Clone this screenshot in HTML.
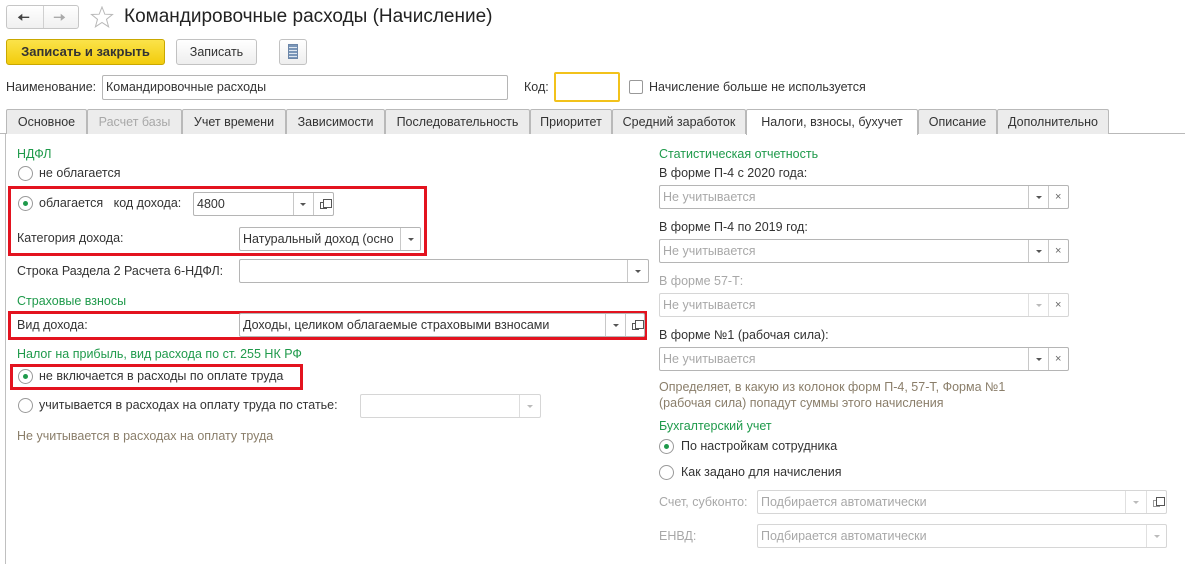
<!DOCTYPE html>
<html><head><meta charset="utf-8"><style>
*{box-sizing:border-box;margin:0;padding:0}
body{width:1185px;height:561px;background:#fff;font-family:"Liberation Sans",Arial,sans-serif;font-size:12.5px;color:#333;position:relative;overflow:hidden}
.a{position:absolute;white-space:nowrap}
.g{color:#1f9a4b}
.n{color:#8a7e6a}
.d{color:#a8a8a8}
.in{position:absolute;border:1px solid #b5b5b5;border-radius:2px;background:#fff;height:24px;line-height:22px;padding-left:3px;overflow:hidden;white-space:nowrap}
.in.dis{border-color:#d6d6d6}
.dv{position:absolute;top:0;bottom:0;border-left:1px solid #c8c8c8}
.ar{position:absolute;top:10px;width:0;height:0;border-left:3px solid transparent;border-right:3px solid transparent;border-top:3px solid #555}
.dis .ar{border-top-color:#bbb}
.x{position:absolute;top:0;font-size:11px;color:#666}
.r{position:absolute;width:15px;height:15px;border:1px solid #9a9a9a;border-radius:50%;background:#fff}
.r.s::after{content:"";position:absolute;left:4px;top:4px;width:5px;height:5px;border-radius:50%;background:#1f9a4b}
.red{position:absolute;border:3px solid #e3131f}
.tab{position:absolute;top:109px;height:25px;border:1px solid #b9b9b9;border-bottom:none;background:#ececec;line-height:24px;text-align:center;border-radius:2px 2px 0 0}
.cp{position:absolute;top:6px;width:9px;height:9px;border:1px solid #555}
.cp::before{content:"";position:absolute;left:2px;top:-4px;width:7px;height:7px;border:1px solid #555;background:#fff}
</style></head><body>
<div class="a" style="left:6px;top:5px;width:73px;height:24px;border:1px solid #c6c6c6;border-radius:3px;background:linear-gradient(#fff,#f0f0f0)"></div>
<div class="a" style="left:43px;top:6px;height:22px;border-left:1px solid #d0d0d0"></div>
<div class="a" style="left:17px;top:7px;font-size:16px;color:#444">&#129028;</div>
<div class="a" style="left:53px;top:7px;font-size:16px;color:#aaa">&#129030;</div>
<svg class="a" style="left:90px;top:6px" width="24" height="22" viewBox="0 0 24 22"><path d="M12 1 L14.8 8.2 L22.5 8.5 L16.5 13.3 L18.6 20.8 L12 16.5 L5.4 20.8 L7.5 13.3 L1.5 8.5 L9.2 8.2 Z" fill="none" stroke="#b8b8b8" stroke-width="1"/></svg>
<div class="a" style="left:124px;top:6px;font-size:19px;color:#222">Командировочные расходы (Начисление)</div>
<div class="a" style="left:6px;top:39px;width:159px;height:26px;border:1px solid #c9a800;border-radius:3px;background:linear-gradient(#fbe34a,#f2cc0c);font-weight:bold;line-height:24px;text-align:center;color:#333;font-size:13px">Записать и закрыть</div>
<div class="a" style="left:176px;top:39px;width:81px;height:26px;border:1px solid #c2c2c2;border-radius:3px;background:linear-gradient(#fff,#eee);line-height:24px;text-align:center">Записать</div>
<div class="a" style="left:279px;top:39px;width:28px;height:26px;border:1px solid #c2c2c2;border-radius:3px;background:linear-gradient(#fff,#eee)"></div>
<div class="a" style="left:288px;top:44px;width:10px;height:15px;background:repeating-linear-gradient(#7a96b8 0 2px,#dfe7f0 2px 3px);border:1px solid #6c86a8"></div>
<div class="a" style="left:6px;top:80px">Наименование:</div>
<div class="in" style="left:102px;top:75px;width:406px;height:25px">Командировочные расходы</div>
<div class="a" style="left:524px;top:80px">Код:</div>
<div class="a" style="left:554px;top:72px;width:66px;height:30px;border:2px solid #f2c21b;border-radius:2px"></div>
<div class="a" style="left:629px;top:80px;width:14px;height:14px;border:1px solid #999;border-radius:2px"></div>
<div class="a" style="left:649px;top:80px">Начисление больше не используется</div>
<div class="a" style="left:0;top:133px;width:1185px;border-top:1px solid #b9b9b9"></div>
<div class="tab" style="left:6px;width:81px">Основное</div>
<div class="tab d" style="left:87px;width:95px">Расчет базы</div>
<div class="tab" style="left:182px;width:104px">Учет времени</div>
<div class="tab" style="left:286px;width:99px">Зависимости</div>
<div class="tab" style="left:385px;width:145px">Последовательность</div>
<div class="tab" style="left:530px;width:82px">Приоритет</div>
<div class="tab" style="left:612px;width:134px">Средний заработок</div>
<div class="tab" style="left:746px;width:172px;background:#fff;height:26px">Налоги, взносы, бухучет</div>
<div class="tab" style="left:918px;width:79px">Описание</div>
<div class="tab" style="left:997px;width:112px">Дополнительно</div>
<div class="a" style="left:5px;top:134px;height:430px;border-left:1px solid #c0c0c0"></div>
<div class="a g" style="left:17px;top:147px">НДФЛ</div>
<div class="r" style="left:18px;top:166px"></div><div class="a" style="left:39px;top:166px">не облагается</div>
<div class="red" style="left:8px;top:186px;width:419px;height:70px"></div>
<div class="r s" style="left:18px;top:196px"></div><div class="a" style="left:39px;top:196px">облагается&nbsp;&nbsp; код дохода:</div>
<div class="in" style="left:193px;top:192px;width:141px">4800<div class="dv" style="left:99px"></div><div class="ar" style="left:106px"></div><div class="dv" style="left:119px"></div><div class="cp" style="left:126px;top:9px;width:7px;height:7px"></div></div>
<div class="a" style="left:17px;top:231px">Категория дохода:</div>
<div class="in" style="left:239px;top:227px;width:182px">Натуральный доход (осно<div class="dv" style="left:160px;background:#fff;width:22px"></div><div class="ar" style="left:168px"></div></div>
<div class="a" style="left:17px;top:264px">Строка Раздела 2 Расчета 6-НДФЛ:</div>
<div class="in" style="left:239px;top:259px;width:410px"><div class="dv" style="left:387px"></div><div class="ar" style="left:395px"></div></div>
<div class="a g" style="left:17px;top:294px">Страховые взносы</div>
<div class="red" style="left:8px;top:311px;width:639px;height:29px"></div>
<div class="a" style="left:17px;top:318px">Вид дохода:</div>
<div class="in" style="left:239px;top:313px;width:406px">Доходы, целиком облагаемые страховыми взносами<div class="dv" style="left:365px"></div><div class="ar" style="left:373px"></div><div class="dv" style="left:385px"></div><div class="cp" style="left:392px;top:9px;width:7px;height:7px"></div></div>
<div class="a g" style="left:17px;top:347px">Налог на прибыль, вид расхода по ст. 255 НК РФ</div>
<div class="red" style="left:10px;top:364px;width:293px;height:26px"></div>
<div class="r s" style="left:18px;top:369px"></div><div class="a" style="left:39px;top:369px">не включается в расходы по оплате труда</div>
<div class="r" style="left:18px;top:398px"></div><div class="a" style="left:39px;top:398px">учитывается в расходах на оплату труда по статье:</div>
<div class="in dis" style="left:360px;top:394px;width:181px"><div class="dv" style="left:158px;border-color:#ddd"></div><div class="ar" style="left:166px"></div></div>
<div class="a n" style="left:17px;top:429px">Не учитывается в расходах на оплату труда</div>
<div class="a g" style="left:659px;top:147px">Статистическая отчетность</div>
<div class="a" style="left:659px;top:166px">В форме П-4 с 2020 года:</div>
<div class="in" style="left:659px;top:185px;width:410px"><span class="d">Не учитывается</span><div class="dv" style="left:368px"></div><div class="ar" style="left:376px"></div><div class="dv" style="left:388px"></div><div class="x" style="left:395px">×</div></div>
<div class="a" style="left:659px;top:220px">В форме П-4 по 2019 год:</div>
<div class="in" style="left:659px;top:239px;width:410px"><span class="d">Не учитывается</span><div class="dv" style="left:368px"></div><div class="ar" style="left:376px"></div><div class="dv" style="left:388px"></div><div class="x" style="left:395px">×</div></div>
<div class="a d" style="left:659px;top:274px">В форме 57-Т:</div>
<div class="in dis" style="left:659px;top:293px;width:410px"><span class="d">Не учитывается</span><div class="dv" style="left:368px;border-color:#e0e0e0"></div><div class="ar" style="left:376px"></div><div class="dv" style="left:388px;border-color:#e0e0e0"></div><div class="x d" style="left:395px">×</div></div>
<div class="a" style="left:659px;top:328px">В форме №1 (рабочая сила):</div>
<div class="in" style="left:659px;top:347px;width:410px"><span class="d">Не учитывается</span><div class="dv" style="left:368px"></div><div class="ar" style="left:376px"></div><div class="dv" style="left:388px"></div><div class="x" style="left:395px">×</div></div>
<div class="a n" style="left:659px;top:379px;line-height:16px">Определяет, в какую из колонок форм П-4, 57-Т, Форма №1<br>(рабочая сила) попадут суммы этого начисления</div>
<div class="a g" style="left:659px;top:419px">Бухгалтерский учет</div>
<div class="r s" style="left:659px;top:439px"></div><div class="a" style="left:681px;top:439px">По настройкам сотрудника</div>
<div class="r" style="left:659px;top:465px"></div><div class="a" style="left:681px;top:465px">Как задано для начисления</div>
<div class="a d" style="left:659px;top:495px">Счет, субконто:</div>
<div class="in dis" style="left:757px;top:490px;width:410px"><span class="d">Подбирается автоматически</span><div class="dv" style="left:367px;border-color:#e0e0e0"></div><div class="ar" style="left:375px"></div><div class="dv" style="left:388px;border-color:#e0e0e0"></div><div class="cp" style="left:395px;top:9px;width:7px;height:7px;border-color:#999"></div></div>
<div class="a d" style="left:659px;top:529px">ЕНВД:</div>
<div class="in dis" style="left:757px;top:524px;width:410px"><span class="d">Подбирается автоматически</span><div class="dv" style="left:388px;border-color:#e0e0e0"></div><div class="ar" style="left:396px"></div></div>
</body></html>
